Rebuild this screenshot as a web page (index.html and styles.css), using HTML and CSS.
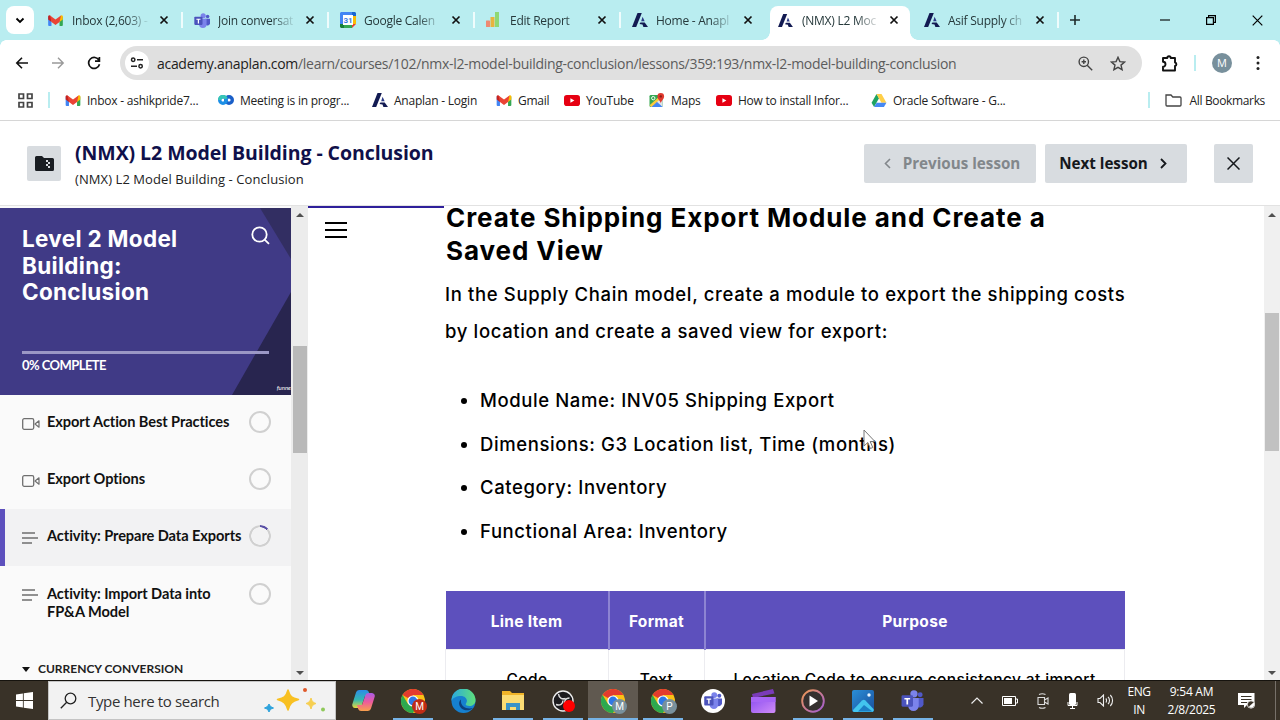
FILE: index.html
```html
<!DOCTYPE html>
<html lang="en">
<head>
    <meta charset="UTF-8">
    <meta name="viewport" content="width=device-width, initial-scale=1.0">
    <title>(NMX) L2 Model Building - Conclusion</title>
    <link rel="stylesheet" href="styles.css">
</head>
<body>
    <!-- Shared icons -->
    <svg class="sprite" width="0" height="0">
        <defs>
            <linearGradient id="copilotA" x1="0" y1="0" x2="0" y2="1"><stop offset="0" stop-color="#2d8be8"/><stop offset=".55" stop-color="#35b8b0"/><stop offset="1" stop-color="#e8d83a"/></linearGradient>
            <linearGradient id="copilotB" x1="0" y1="0" x2="0" y2="1"><stop offset="0" stop-color="#a95be8"/><stop offset=".5" stop-color="#ee5b9c"/><stop offset="1" stop-color="#f8a04c"/></linearGradient>
            <linearGradient id="edgeA" x1="0" y1="0" x2="1" y2="0"><stop offset="0" stop-color="#2aa8e0"/><stop offset="1" stop-color="#5fe07a"/></linearGradient>
            <linearGradient id="clip" x1="0" y1="0" x2="1" y2="1"><stop offset="0" stop-color="#8a4df0"/><stop offset="1" stop-color="#d08cf8"/></linearGradient>
            <linearGradient id="ring" x1="0" y1="0" x2="1" y2="1"><stop offset="0" stop-color="#f09a50"/><stop offset="1" stop-color="#a05ad8"/></linearGradient>
            <linearGradient id="photo" x1="0" y1="0" x2="1" y2="1"><stop offset="0" stop-color="#2a8fd8"/><stop offset="1" stop-color="#1a4f9c"/></linearGradient>
        </defs>
        <symbol id="gmail" viewBox="0 0 16 12">
            <path d="M0 1.5V11a1 1 0 0 0 1 1h2.6V4z" fill="#4285f4"/>
            <path d="M16 1.5V11a1 1 0 0 1-1 1h-2.600V4z" fill="#34a853"/>
            <path d="M0 2v3l3.600 2.700V2.500L2.200.500A1.400 1.400 0 0 0 0 2z" fill="#c5221f"/>
            <path d="M16 2v3l-3.600 2.700V2.500L13.800.500A1.400 1.400 0 0 1 16 2z" fill="#fbbc04"/>
            <path d="M2 .500L8 5l6-4.500-1.600 7.200L8 11 3.600 7.700z" fill="#ea4335"/>
        </symbol>
        <symbol id="teams" viewBox="0 0 24 22">
            <circle cx="19.500" cy="5" r="2.600" fill="#5059c9"/>
            <circle cx="13" cy="4" r="3.800" fill="#7b83eb"/>
            <path d="M16 8.500h7v6.500a4 4 0 0 1-7 2z" fill="#5059c9"/>
            <path d="M7 8.500h11v8a5.500 5.500 0 0 1-11 0z" fill="#7b83eb"/>
            <rect x="0" y="5.500" width="12" height="12" rx="1.200" fill="#4b53bc"/>
            <path d="M3 8.300h6v1.600H6.900v5.400H5.100V9.900H3z" fill="#fff"/>
        </symbol>
        <symbol id="calendar" viewBox="0 0 16 16">
            <path d="M1 0h11v4H4v8H0V1z" fill="#4285f4"/>
            <path d="M12 0h3l1 1v3h-4z" fill="#1967d2"/>
            <path d="M12 4h4v8h-4z" fill="#fbbc04"/>
            <path d="M4 12h8v4H4z" fill="#34a853"/>
            <path d="M0 12h4v4H1l-1-1z" fill="#188038"/>
            <path d="M12 12h4l-4 4z" fill="#ea4335"/>
            <path d="M3 3h10v10H3z" fill="#fff"/>
            <text x="8" y="11" text-anchor="middle" font-size="8" font-weight="700" font-family="Roboto, sans-serif" fill="#3c79e0">31</text>
        </symbol>
        <symbol id="report" viewBox="0 0 14 16">
            <rect x="0" y="8.500" width="4" height="6.500" rx=".600" fill="#ee8a72"/>
            <path d="M4.500 5h4v10h-4z" fill="#e8b33d"/>
            <path d="M9 0h4v15H9z" fill="#8fd873"/>
        </symbol>
        <symbol id="anaplan" viewBox="0 0 16 14">
            <path d="M5.500 0h4.300L4.200 14H0z" fill="#121a52"/>
            <path d="M10.600 3.800l2 4.400H9.200z" fill="#2b3a86"/>
            <path d="M8.400 9.400h4.300L16 14h-4.600l-.900-2.400-3-.600z" fill="#121a52"/>
        </symbol>
        <symbol id="webex" viewBox="0 0 16 12">
            <circle cx="11" cy="6" r="3.300" fill="none" stroke="#1a5fc8" stroke-width="3.400"/>
            <circle cx="5" cy="6" r="3.300" fill="none" stroke="#1c8fe6" stroke-width="3.400"/>
            <path d="M1.700 6a3.300 3.300 0 0 1 6.400-1.200" fill="none" stroke="#37c6b4" stroke-width="3.200"/>
        </symbol>
        <symbol id="youtube" viewBox="0 0 16 11">
            <rect width="16" height="11" rx="2.800" fill="#e60012"/>
            <path d="M6.400 3.200v4.600l4-2.300z" fill="#fff"/>
        </symbol>
        <symbol id="maps" viewBox="0 0 16 16">
            <rect x="0" y="2" width="14" height="13" rx="1.500" fill="#34a853"/>
            <path d="M1 15L14 3v11l-1 1z" fill="#dfe3e8"/>
            <path d="M7.500 9L14 15H1.500z" fill="#4285f4"/>
            <path d="M0 13L12 2.500 13 5 2 15z" fill="#fbcb3c"/>
            <circle cx="4" cy="5.500" r="1.800" fill="none" stroke="#fff" stroke-width="1"/>
            <path d="M12 0a3.600 3.600 0 0 1 3.600 3.600c0 2.600-2.800 4-3.600 7-.800-3-3.600-4.400-3.600-7A3.600 3.600 0 0 1 12 0z" fill="#e0392e"/>
            <circle cx="12" cy="3.600" r="1.300" fill="#8c1d16"/>
        </symbol>
        <symbol id="drive" viewBox="0 0 16 14">
            <path d="M5.300 0L0 9.300 2.700 14 8 4.700z" fill="#1ea362"/>
            <path d="M5.300 0h5.400L16 9.300h-5.400z" fill="#ffcf48"/>
            <path d="M2.700 14l2.700-4.700H16L13.300 14z" fill="#4688f4"/>
        </symbol>
        <symbol id="close" viewBox="0 0 10 10"><path d="M1.500 1.500l7 7M8.500 1.500l-7 7" stroke="currentColor" stroke-width="1.700" fill="none"/></symbol>
        <symbol id="chrome" viewBox="0 0 24 24">
            <circle cx="12" cy="12" r="12" fill="#fbc116"/>
            <path d="M12 12L1.600 6A12 12 0 0 1 22.400 6H12z" fill="#e33b2e"/>
            <path d="M1.600 6A12 12 0 0 0 12 24l5.200-9L12 12l-5 3z" fill="#2da94f"/>
            <circle cx="12" cy="12" r="5.600" fill="#fff"/>
            <circle cx="12" cy="12" r="4.400" fill="#2f78e6"/>
        </symbol>
        <symbol id="video" viewBox="0 0 18 12">
            <rect x=".700" y=".700" width="11" height="10.600" rx="1.500" fill="none" stroke="#6f6f6f" stroke-width="1.300"/>
            <path d="M13 6l4-3.200v6.400z" fill="none" stroke="#6f6f6f" stroke-width="1.200" stroke-linejoin="round"/>
        </symbol>
        <symbol id="lines" viewBox="0 0 16 12">
            <path d="M0 1h13M0 6h16M0 11h10" stroke="#6f6f6f" stroke-width="1.300"/>
        </symbol>
    </svg>

    <div class="tab-strip">
        <div class="tab-search">
            <svg width="10" height="7" viewBox="0 0 10 7"><path d="M1.500 1.500L5 5l3.500-3.500" fill="none" stroke="#000" stroke-width="1.800"/></svg>
        </div>
        <div class="tab"><svg class="favicon" width="15" height="11"><use href="#gmail"/></svg><span class="tab-title">Inbox (2,603) -</span><svg class="tab-close"><use href="#close"/></svg></div>
        <div class="tab"><svg class="favicon" width="17" height="15"><use href="#teams"/></svg><span class="tab-title">Join conversat</span><svg class="tab-close"><use href="#close"/></svg></div>
        <div class="tab"><svg class="favicon" width="16" height="16"><use href="#calendar"/></svg><span class="tab-title">Google Calen</span><svg class="tab-close"><use href="#close"/></svg></div>
        <div class="tab"><svg class="favicon" width="14" height="16"><use href="#report"/></svg><span class="tab-title">Edit Report</span><svg class="tab-close"><use href="#close"/></svg></div>
        <div class="tab no-line"><svg class="favicon" width="16" height="14"><use href="#anaplan"/></svg><span class="tab-title">Home - Anapl</span><svg class="tab-close"><use href="#close"/></svg></div>
        <div class="tab active"><svg class="favicon" width="15" height="13"><use href="#anaplan"/></svg><span class="tab-title">(NMX) L2 Moc</span><svg class="tab-close"><use href="#close"/></svg></div>
        <div class="tab"><svg class="favicon" width="16" height="14"><use href="#anaplan"/></svg><span class="tab-title">Asif Supply ch</span><svg class="tab-close"><use href="#close"/></svg></div>
        <svg class="new-tab" width="12" height="12" viewBox="0 0 12 12"><path d="M6 1v10M1 6h10" stroke="#1f2b2b" stroke-width="1.600"/></svg>
        <div class="window-controls">
            <svg width="10" height="10" viewBox="0 0 10 10"><path d="M0 5h10" stroke="#000" stroke-width="1.100"/></svg>
            <svg width="10" height="10" viewBox="0 0 10 10"><path d="M.600 2.600h6.800v6.800H.600zM2.600 2.600v-2h6.800v6.800h-2" fill="none" stroke="#000" stroke-width="1.200"/></svg>
            <svg width="11" height="11" viewBox="0 0 11 11"><path d="M.700.700l9.600 9.600M10.300.700L.700 10.300" stroke="#000" stroke-width="1.200"/></svg>
        </div>
    </div>

    <div class="toolbar">
        <div class="nav-buttons">
            <svg width="14" height="14" viewBox="0 0 14 14"><path d="M13 7H2M7 1.800L1.800 7 7 12.200" fill="none" stroke="#111" stroke-width="1.600"/></svg>
            <svg width="14" height="14" viewBox="0 0 14 14"><path d="M1 7h11M7 1.800L12.200 7 7 12.200" fill="none" stroke="#999" stroke-width="1.400"/></svg>
            <svg width="14" height="14" viewBox="0 0 14 14"><path d="M12 4.300A5.500 5.500 0 1 0 12.500 8.300M12.400 1v4.200H8" fill="none" stroke="#111" stroke-width="1.700"/></svg>
        </div>
        <div class="omnibox">
            <span class="site-info">
                <svg width="14" height="12" viewBox="0 0 14 12"><g fill="none" stroke="#222" stroke-width="1.500"><circle cx="3.200" cy="2.800" r="1.700"/><path d="M7 2.800h6M1 9.200h6"/><circle cx="10.600" cy="9.200" r="1.700"/></g></svg>
            </span>
            <span class="url">academy.anaplan.com<span class="url-path">/learn/courses/102/nmx-l2-model-building-conclusion/lessons/359:193/nmx-l2-model-building-conclusion</span></span>
            <svg class="omni-zoom" width="15" height="15" viewBox="0 0 15 15"><g fill="none" stroke="#444" stroke-width="1.400"><circle cx="5.800" cy="5.800" r="4.700"/><path d="M9.200 9.200l5 5M5.800 3.600v4.400M3.600 5.800h4.400"/></g></svg>
            <svg class="omni-star" width="16" height="15" viewBox="0 0 16 15"><path d="M8 1.300l1.900 4.300 4.700.400-3.600 3.100 1.100 4.600L8 11.300l-4.100 2.400L5 9.100 1.400 6l4.700-.400z" fill="none" stroke="#444" stroke-width="1.400"/></svg>
        </div>
        <svg class="extensions" width="18" height="17" viewBox="0 0 18 17"><path d="M2 3h4.300a1.700 1.700 0 0 1 3.400 0H14v4.500a1.800 1.800 0 0 1 0 3.500v4.500H2v-3.700a2.400 2.400 0 0 0 0-5z" fill="none" stroke="#111" stroke-width="1.900" stroke-linejoin="round"/></svg>
        <span class="divider"></span>
        <span class="avatar">M</span>
        <svg class="menu-dots" width="4" height="16" viewBox="0 0 4 16"><g fill="#222"><circle cx="2" cy="2.500" r="1.500"/><circle cx="2" cy="8" r="1.500"/><circle cx="2" cy="13.500" r="1.500"/></g></svg>
    </div>

    <div class="bookmarks">
        <svg width="15" height="15" viewBox="0 0 15 15"><path d="M1 1h4.500v4.500H1zM9.500 1H14v4.500H9.500zM1 9.500h4.500V14H1zM9.500 9.500H14V14H9.500z" fill="none" stroke="#444" stroke-width="1.700"/></svg>
        <span class="divider"></span>
        <div class="bookmark-list">
            <div class="bookmark"><svg width="15" height="11"><use href="#gmail"/></svg>Inbox - ashikpride7...</div>
            <div class="bookmark"><svg width="16" height="12"><use href="#webex"/></svg>Meeting is in progr...</div>
            <div class="bookmark"><svg width="16" height="14"><use href="#anaplan"/></svg>Anaplan - Login</div>
            <div class="bookmark"><svg width="15" height="11"><use href="#gmail"/></svg>Gmail</div>
            <div class="bookmark"><svg width="16" height="11"><use href="#youtube"/></svg>YouTube</div>
            <div class="bookmark"><svg width="15" height="15"><use href="#maps"/></svg>Maps</div>
            <div class="bookmark"><svg width="16" height="11"><use href="#youtube"/></svg>How to install Infor...</div>
            <div class="bookmark"><svg width="15" height="13"><use href="#drive"/></svg>Oracle Software - G...</div>
        </div>
        <span class="divider"></span>
        <div class="bookmark all-bookmarks"><svg width="17" height="13" viewBox="0 0 17 13"><path d="M1 1h5l1.800 2H15a1 1 0 0 1 1 1v7a1 1 0 0 1-1 1H2a1 1 0 0 1-1-1z" fill="none" stroke="#444" stroke-width="1.300"/></svg>All Bookmarks</div>
    </div>

    <header class="lesson-header">
        <div class="lesson-icon">
            <svg width="19" height="15" viewBox="0 0 19 15"><path d="M0 1.500A1.500 1.500 0 0 1 1.500 0H7l2 2h8.500A1.500 1.500 0 0 1 19 3.500v10a1.500 1.500 0 0 1-1.500 1.500h-16A1.500 1.500 0 0 1 0 13.500z" fill="#191d22"/><path d="M11 4h2v2h-2zM13 6h2v2h-2zM11 8h2v2h-2zM13 10h2v2h-2z" fill="#d8dce0"/></svg>
        </div>
        <div class="lesson-titles">
            <h1>(NMX) L2 Model Building - Conclusion</h1>
            <p>(NMX) L2 Model Building - Conclusion</p>
        </div>
        <button class="btn btn-prev" disabled><svg width="7" height="11" viewBox="0 0 7 11"><path d="M6 1L1.500 5.500 6 10" fill="none" stroke="currentColor" stroke-width="1.600"/></svg>Previous lesson</button>
        <button class="btn btn-next">Next lesson<svg width="7" height="11" viewBox="0 0 7 11"><path d="M1 1l4.500 4.500L1 10" fill="none" stroke="currentColor" stroke-width="1.800"/></svg></button>
        <button class="btn btn-close"><svg width="13" height="13" viewBox="0 0 13 13"><path d="M.500.500l12 12M12.500.500l-12 12" stroke="currentColor" stroke-width="1.500"/></svg></button>
    </header>

    <div class="content">
        <aside class="sidebar">
            <div class="course-hero">
                <svg class="hero-shapes" width="291" height="187" viewBox="0 0 291 187"><path d="M260 0h31v51z" fill="#322e62"/><path d="M291 84v103h-59z" fill="#28254f"/></svg>
                <h2>Level 2 Model Building: Conclusion</h2>
                <svg class="hero-search" width="19" height="19" viewBox="0 0 19 19"><g fill="none" stroke="#fff" stroke-width="1.800"><circle cx="8.500" cy="8.500" r="7.200"/><path d="M13.600 13.600l4.400 4.200"/></g></svg>
                <div class="progress"></div>
                <span class="progress-label">0% COMPLETE</span>
                <span class="hero-mark">funne</span>
            </div>
            <div class="lesson"><svg width="18" height="12"><use href="#video"/></svg><span>Export Action Best Practices</span><i class="circle"></i></div>
            <div class="lesson"><svg width="18" height="12"><use href="#video"/></svg><span>Export Options</span><i class="circle"></i></div>
            <div class="lesson current"><svg width="16" height="12"><use href="#lines"/></svg><span>Activity: Prepare Data Exports</span><i class="circle started"></i></div>
            <div class="lesson tall"><svg width="16" height="12"><use href="#lines"/></svg><span>Activity: Import Data into<br>FP&amp;A Model</span><i class="circle"></i></div>
            <div class="section-title"><i class="caret"></i>CURRENCY CONVERSION</div>
        </aside>
        <div class="scrollbar side-scroll"><i class="arrow-up"></i><i class="thumb"></i><i class="arrow-down"></i></div>

        <main class="lesson-body">
            <div class="load-bar"></div>
            <svg class="hamburger" width="22" height="16" viewBox="0 0 22 16"><path d="M0 1h22M0 8h22M0 15h22" stroke="#000" stroke-width="1.900"/></svg>
            <article>
                <h2>Create Shipping Export Module and Create a<br>Saved View</h2>
                <p>In the Supply Chain model, create a module to export the shipping costs<br>by location and create a saved view for export:</p>
                <ul>
                    <li>Module Name: INV05 Shipping Export</li>
                    <li>Dimensions: G3 Location list, Time (months)</li>
                    <li>Category: Inventory</li>
                    <li>Functional Area: Inventory</li>
                </ul>
                <table>
                    <tr><th class="col-item">Line Item</th><th class="col-format">Format</th><th>Purpose</th></tr>
                    <tr><td>Code</td><td>Text</td><td>Location Code to ensure consistency at import</td></tr>
                </table>
            </article>
            <svg class="cursor" width="14" height="21" viewBox="0 0 14 21"><path d="M1 1v16l3.800-3.500 2.600 6 2.400-1-2.600-5.900H12z" fill="#fff" stroke="#777" stroke-width="1"/></svg>
        </main>
        <div class="scrollbar main-scroll"><i class="arrow-up"></i><i class="thumb"></i><i class="arrow-down"></i></div>
    </div>

    <footer class="taskbar">
        <div class="start"><svg width="17" height="17" viewBox="0 0 18 18"><path d="M0 2.600l7.300-1v7H0zM8.200 1.400L18 0v8.600H8.200zM0 9.400h7.300v7L0 15.400zM8.200 9.400H18V18l-9.800-1.400z" fill="#fff"/></svg></div>
        <div class="search">
            <svg width="17" height="17" viewBox="0 0 17 17"><g fill="none" stroke="#222" stroke-width="1.300"><circle cx="10.500" cy="6.500" r="5.300"/><path d="M6.700 10.300L.800 16.200"/></g></svg>
            <span>Type here to search</span>
            <svg class="sparkles" width="62" height="28" viewBox="0 0 62 28">
                <path d="M24 3c2 7 4 8 10.500 9.500C28 14.500 26 16 24 23c-2-7-4-8.500-10.500-10.500C20 11 22 10 24 3z" fill="#f8c022" stroke="#f8c022" stroke-width="1.500" stroke-linejoin="round"/>
                <path d="M47 11c1 3.500 2 4.500 5 5.500-3 1-4 2-5 5.500-1-3.500-2-4.500-5-5.500 3-1 4-2 5-5.500z" fill="#f6cf52" stroke="#f6cf52"/>
                <path d="M5 17l1.500 2.500 3 1.500-3 1.200L5 25l-1.500-2.800L.500 21l3-1.500z" fill="#2fa3dc" stroke="#2fa3dc"/>
                <circle cx="41" cy="3" r="2" fill="#e0592a"/><circle cx="59" cy="22.500" r="2" fill="#8fc95a"/>
            </svg>
        </div>
        <div class="apps">
            <div class="app"><svg width="23" height="21" viewBox="0 0 23 21"><path d="M7 0h7a3 3 0 0 1 2.800 2L18 6h-5l-3.500 10A3 3 0 0 1 6.500 18H3a3 3 0 0 1-2.600-4L4 2.500A3.300 3.300 0 0 1 7 0z" fill="url(#copilotA)"/><path d="M16 21H9a3 3 0 0 1-2.800-2L5 15h5l3.500-10A3 3 0 0 1 16.500 3H20a3 3 0 0 1 2.600 4L19 18.500a3.300 3.300 0 0 1-3 2.500z" fill="url(#copilotB)"/></svg></div>
            <div class="app open"><svg width="24" height="24"><use href="#chrome"/></svg><b class="badge red">M</b></div>
            <div class="app"><svg width="25" height="24" viewBox="0 0 24 24"><circle cx="12" cy="12" r="12" fill="#1680cf"/><path d="M0 12A12 12 0 0 1 24 11c0 4-3 6-6 6-3 0-4.500-1-3.500-2.500C17 11 14 7 9.500 7 5 7 1 9 0 12z" fill="url(#edgeA)"/><path d="M9.500 10.500c-4 3-1.500 9 3.500 10.500 3 .800 6.500 0 8.500-2-6 1.500-13-1-12-8.500z" fill="#0d3f7d"/></svg></div>
            <div class="app open"><svg width="22" height="19" viewBox="0 0 22 19"><path d="M0 0h8l2 2h12v17H0z" fill="#f0b429"/><path d="M0 4h22v15H0z" fill="#fbdc74"/><path d="M4 19v-7h14v7h-4v-3H8v3z" fill="#3a93c8"/></svg></div>
            <div class="app open"><svg width="22" height="22" viewBox="0 0 22 22"><circle cx="11" cy="11" r="10" fill="#1c1b1e" stroke="#eee" stroke-width="1.400"/><path d="M6.500 4c.500 4.500 4 5.500 7 4.500M17.500 8c-4.500 0-6 3.500-4 7.500M4 14.500c4 1.500 7-.500 7-4" fill="none" stroke="#ddd" stroke-width="1.500"/></svg><b class="badge record"></b></div>
            <div class="app open active"><svg width="24" height="24"><use href="#chrome"/></svg><b class="badge grey">M</b></div>
            <div class="app open"><svg width="24" height="24"><use href="#chrome"/></svg><b class="badge grey">P</b></div>
            <div class="app"><span class="teams-round"><svg width="19" height="17"><use href="#teams"/></svg></span></div>
            <div class="app"><svg width="25" height="24" viewBox="0 0 25 24"><path d="M1 5L22 0l1.500 4.500L2 9z" fill="#7a3bb8"/><path d="M0 8h24.500v14a2 2 0 0 1-2 2H2a2 2 0 0 1-2-2z" fill="url(#clip)"/><path d="M0 8h24.500v5H0z" fill="#a765f5"/></svg></div>
            <div class="app open"><svg width="24" height="24" viewBox="0 0 24 24"><circle cx="12" cy="12" r="10.800" fill="#35302f" stroke="url(#ring)" stroke-width="1.900"/><path d="M8.500 6.500v11l8.500-5.500z" fill="#fff"/></svg></div>
            <div class="app open"><svg width="22" height="22" viewBox="0 0 22 22"><rect width="22" height="22" rx="2" fill="url(#photo)"/><path d="M1 20L10 10.500a2.500 2.500 0 0 1 3.400 0L21.500 19A2 2 0 0 1 20 22H2a1.500 1.500 0 0 1-1-2z" fill="#42c5ee"/><path d="M12 15l8.500 6.500H6z" fill="#1c7fc4"/><circle cx="17" cy="5" r="1.700" fill="#e8f6ff"/></svg></div>
            <div class="app open"><svg width="24" height="21"><use href="#teams"/></svg></div>
        </div>
        <div class="tray">
            <svg width="12" height="7" viewBox="0 0 12 7"><path d="M.500 6.500L6 1l5.500 5.500" fill="none" stroke="#eee" stroke-width="1.200"/></svg>
            <svg width="16" height="10" viewBox="0 0 16 10"><path d="M.500.500h13v9H.500zM14 3h1.500v4H14" fill="none" stroke="#fff"/><path d="M2 2h8v6H2z" fill="#fff"/></svg>
            <svg width="12" height="16" viewBox="0 0 12 16"><path d="M1 4.500h6.500v7H1zM7.500 7L11 5v6L7.500 9M2 1.500c2-1 4.500-1 6.500 0M2 14.500c2 1 4.500 1 6.500 0" fill="none" stroke="#ddd" stroke-width="1.100"/></svg>
            <svg width="11" height="16" viewBox="0 0 11 16"><rect x="2" y="0" width="7" height="12" rx="1.500" fill="#fff"/><path d="M1 9v3.500h9V9M5.500 12.500V16M3 15.500h5" fill="none" stroke="#fff"/></svg>
            <svg width="17" height="13" viewBox="0 0 17 13"><path d="M1 4.500h2L6.500 1v11L3 8.500H1zM8.800 4.500c1 1 1 3 0 4M11 2.800c2 2 2 5.400 0 7.400M13.300 1c3 3 3 8 0 11" fill="none" stroke="#eee" stroke-width="1.100"/></svg>
        </div>
        <div class="lang">ENG<br>IN</div>
        <div class="clock">9:54 AM<br>2/8/2025</div>
        <div class="notices"><svg width="17" height="17" viewBox="0 0 17 17"><path d="M0 1h16.500v12H9l-3 3v-3H0z" fill="#fff"/><path d="M3 4.500h10.500M3 7.500h10.500M3 10.500h6" stroke="#393228" stroke-width="1"/><circle cx="13" cy="12.500" r="3.700" fill="#393228" stroke="#fff" stroke-width=".800"/><path d="M15.500 10.500a3 3 0 0 1-4.500 4z" fill="#fff"/></svg></div>
    </footer>
</body>
</html>
```
FILE: styles.css
```css
* {
    box-sizing: border-box;
}
body {
    margin: 0;
    width: 1280px;
    height: 720px;
    overflow: hidden;
    display: flex;
    flex-direction: column;
    background: #fff;
    font-family: "Open Sans", "Noto Sans", sans-serif;
    color: #000;
}
svg {
    flex-shrink: 0;
    display: block;
}
button {
    border: none;
    font-family: inherit;
    padding: 0;
}
.sprite {
    position: absolute;
}

/* Browser tabs */
.tab-strip {
    height: 40px;
    flex-shrink: 0;
    background: #b9edf0;
    display: flex;
    align-items: center;
    padding-left: 6px;
}
.tab-search {
    width: 28px;
    height: 28px;
    margin-right: 3px;
    border-radius: 8px;
    background: #fff;
    display: flex;
    align-items: center;
    justify-content: center;
}
.tab {
    width: 146px;
    height: 40px;
    padding-left: 11px;
    display: flex;
    align-items: center;
    position: relative;
    font-size: 12px;
    color: #26393b;
}
.tab::after {
    content: "";
    width: 2px;
    height: 16px;
    margin-left: 12px;
    background: #effcfc;
}
.tab.no-line::after {
    background: none;
}
.favicon {
    margin-right: 7px;
}
.tab-title {
    width: 78px;
    margin-right: 9px;
    margin-left: auto;
    white-space: nowrap;
    letter-spacing: -0.25px;
    -webkit-mask-image: linear-gradient(90deg, #000 70%, transparent 100%);
    mask-image: linear-gradient(90deg, #000 70%, transparent 100%);
}
.tab-close {
    width: 10px;
    height: 10px;
    color: #111;
}
.tab.active {
    height: 34px;
    align-self: flex-end;
    padding-right: 14px;
    padding-bottom: 6px;
    z-index: 0;
}
.tab.active::before {
    content: "";
    position: absolute;
    z-index: -1;
    left: 3px;
    right: 3px;
    top: 0;
    bottom: 0;
    background: #fff;
    border-radius: 8px 8px 0 0;
}
.tab.active::after {
    position: absolute;
    left: -5px;
    right: -5px;
    bottom: 0;
    width: auto;
    height: 8px;
    margin: 0;
    z-index: -1;
    background:
        radial-gradient(circle at 0 0, transparent 7.5px, #fff 8px) left / 8px 8px no-repeat,
        radial-gradient(circle at 100% 0, transparent 7.5px, #fff 8px) right / 8px 8px no-repeat;
}
.new-tab {
    margin-left: 10px;
}
.window-controls {
    margin-left: auto;
    padding-right: 17px;
    display: flex;
    align-items: center;
    gap: 36px;
}

/* Toolbar */
.toolbar {
    height: 47px;
    flex-shrink: 0;
    display: flex;
    align-items: center;
    padding: 0 20px 1px 15px;
    background:
        radial-gradient(circle at 6px 6px, transparent 5.5px, #b9edf0 6px) 0 0 / 6px 6px no-repeat,
        radial-gradient(circle at 0 6px, transparent 5.5px, #b9edf0 6px) 100% 0 / 6px 6px no-repeat;
}
.nav-buttons {
    display: flex;
    gap: 22px;
    width: 105px;
}
.omnibox {
    width: 1022px;
    height: 34px;
    border-radius: 17px;
    background: #e0e0e0;
    display: flex;
    align-items: center;
    padding: 0 16px 0 5px;
}
.site-info {
    width: 24px;
    height: 24px;
    border-radius: 50%;
    background: #fff;
    display: flex;
    align-items: center;
    justify-content: center;
}
.url {
    flex: 1;
    padding-left: 8px;
    font-size: 14px;
    letter-spacing: -0.3px;
    white-space: nowrap;
    color: #1d1d1d;
}
.url-path {
    color: #5c5c5c;
}
.omni-star {
    margin-left: 17px;
}
.extensions {
    margin-left: 19px;
}
.divider {
    width: 2px;
    height: 16px;
    background: #b9edf0;
}
.toolbar .divider {
    margin: 0 16px 0 15px;
}
.avatar {
    width: 20px;
    height: 20px;
    border-radius: 50%;
    background: #78909c;
    color: #fff;
    font-size: 11px;
    line-height: 20px;
    text-align: center;
}
.menu-dots {
    margin-left: auto;
}

/* Bookmarks bar */
.bookmarks {
    height: 34px;
    flex-shrink: 0;
    display: flex;
    align-items: center;
    padding: 0 15px 7px 18px;
    border-bottom: 1px solid #d6d6d6;
    font-size: 12px;
    color: #222;
}
.bookmarks .divider {
    margin-left: 15px;
    margin-right: 15px;
}
.bookmark-list {
    flex: 1;
    display: grid;
    grid-template-columns: 153px 154px 124px 68px 85px 67px 155px 1fr;
}
.bookmark {
    display: flex;
    align-items: center;
    gap: 6px;
    white-space: nowrap;
    letter-spacing: -0.23px;
}
.bookmark-list svg {
    width: 16px;
}
.all-bookmarks {
    gap: 8px;
    letter-spacing: -0.35px;
}

/* Lesson header */
.lesson-header {
    height: 85px;
    flex-shrink: 0;
    display: flex;
    align-items: center;
    padding: 0 27px;
    border-bottom: 1px solid #e2e2e2;
}
.lesson-icon {
    width: 34px;
    height: 35px;
    background: #d8dce0;
    border-radius: 2px;
    display: flex;
    align-items: center;
    justify-content: center;
}
.lesson-titles {
    flex: 1;
    padding-left: 14px;
}
.lesson-titles h1 {
    margin: 4px 0 0;
    font-size: 19.5px;
    line-height: 28px;
    letter-spacing: -0.07px;
    color: #10104a;
}
.lesson-titles p {
    margin: 0;
    font-size: 13px;
    line-height: 24px;
    letter-spacing: 0.08px;
    color: #222;
}
.btn {
    height: 39px;
    background: #d8dce0;
    border-radius: 2px;
    color: #15181c;
    font-size: 15.2px;
    font-weight: 700;
    display: flex;
    align-items: center;
    justify-content: center;
}
.btn-prev {
    width: 172px;
    margin-right: 9px;
    padding-left: 4px;
    gap: 12px;
    color: #82878b;
}
.btn-next {
    width: 142px;
    margin-right: 27px;
    padding-right: 6px;
    gap: 12px;
}
.btn-close {
    width: 39px;
}

/* Course content */
.content {
    height: 474px;
    flex-shrink: 0;
    display: flex;
    overflow: hidden;
}
.sidebar {
    width: 291px;
    padding-top: 2px;
    background: #fafafa;
    font-family: Lato, sans-serif;
    overflow: hidden;
}
.course-hero {
    height: 187px;
    padding: 18px 22px 0;
    position: relative;
    background: #403a86;
    color: #fff;
    overflow: hidden;
}
.hero-shapes {
    position: absolute;
    left: 0;
    top: 0;
}
.course-hero h2 {
    position: relative;
    width: 180px;
    height: 125px;
    margin: 0;
    font-family: Inter, sans-serif;
    font-size: 22.5px;
    font-weight: 700;
    line-height: 26.5px;
    letter-spacing: 0.3px;
}
.hero-search {
    position: absolute;
    right: 21px;
    top: 18px;
}
.progress {
    position: relative;
    height: 3px;
    background: #9b97c5;
}
.progress-label {
    position: relative;
    display: block;
    margin-top: 2px;
    font-size: 13px;
    font-weight: 700;
    line-height: 18px;
    letter-spacing: -0.55px;
}
.hero-mark {
    position: absolute;
    right: 0;
    bottom: 3px;
    font-size: 6px;
    font-style: italic;
    line-height: 8px;
}
.lesson {
    height: 57px;
    padding: 0 20px 3px 22px;
    display: flex;
    align-items: center;
    font-size: 14.6px;
    font-weight: 700;
    line-height: 18px;
    color: #111;
}
.lesson svg {
    margin-top: 3px;
}
.lesson span {
    width: 202px;
    margin-left: 7px;
    letter-spacing: -0.08px;
    white-space: nowrap;
}
.lesson svg[width="16"] + span {
    margin-left: 9px;
}
.circle {
    width: 22px;
    height: 22px;
    flex-shrink: 0;
    border: 2px solid #d0d0d0;
    border-radius: 50%;
}
.circle.started {
    border: none;
    background: conic-gradient(#5a50a5 0 45deg, #d0d0d0 45deg);
    -webkit-mask: radial-gradient(circle, transparent 8.5px, #000 9px);
    mask: radial-gradient(circle, transparent 8.5px, #000 9px);
}
.lesson.current {
    background: #f2f2f3;
    box-shadow: inset 5px 0 #5d50bd;
}
.lesson.tall {
    height: 92px;
    padding-top: 19px;
    align-items: flex-start;
}
.lesson.tall svg {
    margin-top: 4px;
}
.lesson.tall .circle {
    margin-top: -2px;
}
.section-title {
    margin-top: -1px;
    padding: 0 22px;
    display: flex;
    align-items: center;
    font-size: 12px;
    line-height: 24px;
    font-weight: 700;
    color: #222;
}
.caret {
    border: 4px solid transparent;
    border-top: 5px solid #111;
    border-bottom: 0;
    margin-right: 8px;
}

/* Scrollbars */
.scrollbar {
    width: 17px;
    background: #f0f0f0;
    display: flex;
    flex-direction: column;
    align-items: center;
}
.arrow-up,
.arrow-down {
    border: 4px solid transparent;
}
.arrow-up {
    border-top: 0;
    border-bottom: 4px solid #505050;
    margin-top: 7px;
}
.arrow-down {
    border-bottom: 0;
    border-top: 4px solid #505050;
    margin-top: auto;
    margin-bottom: 5px;
}
.thumb {
    width: 14px;
    background: #c1c1c1;
}
.side-scroll {
    background: #ececec;
}
.side-scroll .thumb {
    height: 107px;
    margin-top: 129px;
    background: #b9b9b9;
}
.main-scroll {
    width: 16px;
}
.main-scroll .thumb {
    height: 138px;
    margin-top: 96px;
}

/* Lesson body */
.lesson-body {
    flex: 1;
    position: relative;
    display: flex;
    font-family: Inter, sans-serif;
}
.load-bar {
    position: absolute;
    left: 0;
    top: 0;
    width: 136px;
    height: 2px;
    background: #2e1f9a;
}
.hamburger {
    margin: 16px 98px 0 17px;
}
article h2 {
    margin: -5px 0 0;
    padding-left: 1px;
    font-size: 26px;
    line-height: 33px;
    font-weight: 700;
    letter-spacing: 0.92px;
    white-space: nowrap;
}
article p {
    margin: 9px 0 30px;
    font-size: 18.5px;
    line-height: 36.5px;
    font-weight: 500;
    letter-spacing: 0.64px;
    white-space: nowrap;
}
article ul {
    margin: 0 0 38px;
    padding-left: 35px;
    font-size: 18.5px;
    line-height: 43.6px;
    font-weight: 500;
    letter-spacing: 0.6px;
    white-space: nowrap;
}
article table {
    width: 680px;
    table-layout: fixed;
    border-collapse: collapse;
    font-size: 15.5px;
    text-align: center;
    letter-spacing: 0.38px;
}
th {
    height: 58px;
    padding: 3px 0 0;
    background: #5d50bd;
    border-left: 2px solid #8d84d2;
    color: #fff;
    letter-spacing: 0.3px;
}
th:first-child {
    border-left: none;
}
td {
    height: 60px;
    padding: 0;
    border: 1px solid #ececf0;
    font-weight: 500;
}
.col-item {
    width: 163px;
}
.col-format {
    width: 96px;
}
.cursor {
    position: absolute;
    left: 555px;
    top: 223px;
}

/* Taskbar */
.taskbar {
    height: 40px;
    flex-shrink: 0;
    background: #393228;
    border-top: 1px solid #16130e;
    display: flex;
    color: #fff;
}
.start {
    width: 48px;
    display: flex;
    align-items: center;
    justify-content: center;
}
.search {
    width: 288px;
    background: #f2f2f2;
    border: 1px solid #c4c4c4;
    display: flex;
    align-items: center;
    padding: 0 9px 0 11px;
    color: #333;
    font-size: 15px;
}
.search span {
    margin-left: 11px;
    flex: 1;
    letter-spacing: -0.35px;
    white-space: nowrap;
}
.apps {
    display: flex;
    padding-left: 2px;
}
.app {
    width: 50px;
    position: relative;
    display: flex;
    align-items: center;
    justify-content: center;
}
.app.open::after {
    content: "";
    position: absolute;
    left: 5px;
    right: 5px;
    bottom: 0;
    height: 2px;
    background: #76b3e6;
}
.app.active {
    background: #605950;
}
.app.active::after {
    left: 0;
    right: 0;
}
.badge {
    position: absolute;
    left: 24px;
    top: 18px;
    width: 15px;
    height: 15px;
    border-radius: 50%;
    font: 10px/15px Roboto, sans-serif;
    text-align: center;
}
.badge.red {
    background: #c02c16;
}
.badge.grey {
    background: #78909c;
}
.badge.record {
    background: #f00;
    width: 12px;
    height: 12px;
    left: 25px;
    top: 19px;
}
.teams-round {
    width: 24px;
    height: 24px;
    border-radius: 50%;
    background: #fff;
    display: flex;
    align-items: center;
    justify-content: center;
}
.tray {
    width: 180px;
    padding: 0 4px 0 33px;
    display: flex;
    align-items: center;
    justify-content: space-between;
}
.lang,
.clock {
    font-size: 12px;
    line-height: 18px;
    padding-top: 2px;
    text-align: center;
    letter-spacing: -0.25px;
}
.lang {
    width: 42px;
    letter-spacing: -0.4px;
}
.clock {
    width: 63px;
    white-space: nowrap;
}
.notices {
    width: 53px;
    display: flex;
    align-items: center;
    justify-content: center;
    border-right: 1px solid #77716a;
    padding-right: 6px;
}
```
